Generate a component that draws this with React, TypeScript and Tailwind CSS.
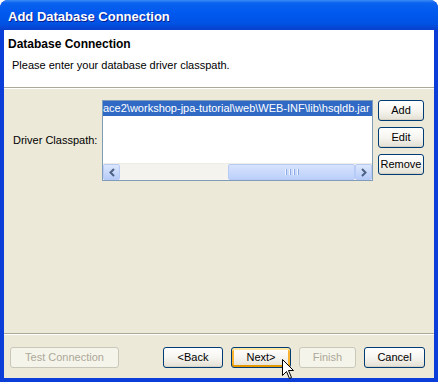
import React from "react";

const font = { fontFamily: '"Liberation Sans", Arial, sans-serif' };

function XpButton({ label, w, state }: { label: string; w: number; state: "normal" | "disabled" | "hover" }) {
  if (state === "disabled") {
    return (
      <div
        className="h-[21px] flex items-center justify-center rounded-[3px] border border-[#c9c7ba] bg-[#f5f4ea] text-[#aca899] text-[11px]"
        style={{ width: w }}
      >
        {label}
      </div>
    );
  }
  if (state === "hover") {
    return (
      <div
        className="h-[21px] flex items-center justify-center rounded-[3px] border border-[#003c74] text-black text-[11px] bg-gradient-to-b from-[#ffffff] via-[#f6f5f0] to-[#e3e0d3] shadow-[inset_0_2px_0_#ffe7a2,inset_0_-2px_0_#e59700,inset_2px_0_0_#f8b330,inset_-2px_0_0_#f8b330]"
        style={{ width: w }}
      >
        {label}
      </div>
    );
  }
  return (
    <div
      className="h-[21px] flex items-center justify-center rounded-[3px] border border-[#003c74] text-black text-[11px] bg-gradient-to-b from-[#ffffff] via-[#f6f5f0] to-[#e3e0d3] shadow-[inset_0_-1px_0_#d6d0c5]"
      style={{ width: w }}
    >
      {label}
    </div>
  );
}

function SideButton({ label }: { label: string }) {
  return (
    <div className="w-[46px] h-[21px] flex items-center justify-center rounded-[3px] border border-[#003c74] text-black text-[11px] bg-gradient-to-b from-[#ffffff] via-[#f6f5f0] to-[#e3e0d3] shadow-[inset_0_-1px_0_#d6d0c5]">
      {label}
    </div>
  );
}

export default function App() {
  return (
    <div className="w-[438px] h-[382px] bg-white relative" style={font}>
      <div className="w-full h-full flex flex-col rounded-t-[8px] overflow-hidden bg-[#0b3ed8]">
        {/* Title bar */}
        <div className="h-[30px] flex items-center pl-[8px] pt-[3px] bg-[linear-gradient(to_bottom,#3b8cf5_0%,#0a62f0_10%,#0058ee_45%,#0052e3_80%,#0a3fcc_100%)]">
          <span className="text-white font-bold text-[13px] [text-shadow:1px_1px_0_#0a1f8f]">
            Add Database Connection
          </span>
        </div>
        {/* Client area */}
        <div className="flex-1 flex flex-col mx-[4px] mb-[4px] bg-[#ece9d8]">
          {/* Header */}
          <div className="h-[57px] bg-white flex flex-col pl-[4px] pt-[5px]">
            <div className="text-[12px] font-bold text-black leading-[16px] pt-[1px]">Database Connection</div>
            <div className="text-[11px] text-black leading-[14px] mt-[6px] pl-[4px]">
              Please enter your database driver classpath.
            </div>
          </div>
          <div className="h-[1px] bg-[#aca899]" />
          <div className="h-[1px] bg-white" />
          {/* Middle */}
          <div className="flex-1 flex items-start pt-[11px] pl-[9px]">
            <div className="w-[89px] h-[81px] flex items-center text-[11px] text-black">Driver Classpath:</div>
            <div className="w-[271px] h-[81px] border border-[#7f9db9] bg-white flex flex-col">
              <div className="h-[15px] bg-[#316ac5] text-white text-[11px] leading-[15px] whitespace-nowrap overflow-hidden">
                ace2\workshop-jpa-tutorial\web\WEB-INF\lib\hsqldb.jar
              </div>
              <div className="flex-1" />
              {/* Scrollbar */}
              <div className="h-[17px] flex bg-[#f4f3ee] border-t border-[#eeede5]">
                <div className="w-[17px] h-full rounded-[2px] border border-[#b8cbf6] bg-gradient-to-b from-[#dce7fd] to-[#b6cbf8] flex items-center justify-center">
                  <svg width="8" height="9" viewBox="0 0 8 9">
                    <path d="M6 1 L2.5 4.5 L6 8" stroke="#4d6185" strokeWidth="2" fill="none" />
                  </svg>
                </div>
                <div className="flex-1 flex justify-end">
                  <div className="w-[127px] h-full rounded-[2px] border border-[#b8cbf6] bg-gradient-to-b from-[#d7e3fd] to-[#bcd0fa] flex items-center justify-center gap-[1px]">
                    <div className="w-[1px] h-[6px] bg-[#eef3fe] shadow-[1px_0_0_#8caae6]" />
                    <div className="w-[1px] h-[6px] bg-transparent" />
                    <div className="w-[1px] h-[6px] bg-[#eef3fe] shadow-[1px_0_0_#8caae6]" />
                    <div className="w-[1px] h-[6px] bg-transparent" />
                    <div className="w-[1px] h-[6px] bg-[#eef3fe] shadow-[1px_0_0_#8caae6]" />
                    <div className="w-[1px] h-[6px] bg-transparent" />
                    <div className="w-[1px] h-[6px] bg-[#eef3fe] shadow-[1px_0_0_#8caae6]" />
                  </div>
                </div>
                <div className="w-[17px] h-full rounded-[2px] border border-[#b8cbf6] bg-gradient-to-b from-[#dce7fd] to-[#b6cbf8] flex items-center justify-center">
                  <svg width="8" height="9" viewBox="0 0 8 9">
                    <path d="M2 1 L5.5 4.5 L2 8" stroke="#4d6185" strokeWidth="2" fill="none" />
                  </svg>
                </div>
              </div>
            </div>
            <div className="ml-[5px] flex flex-col gap-[6px]">
              <SideButton label="Add" />
              <SideButton label="Edit" />
              <SideButton label="Remove" />
            </div>
          </div>
          {/* Bottom bar */}
          <div className="h-[1px] bg-[#aca899]" />
          <div className="h-[1px] bg-white" />
          <div className="h-[43px] flex items-start pt-[12px] pl-[6px] pr-[9px]">
            <XpButton label="Test Connection" w={109} state="disabled" />
            <div className="flex-1" />
            <div className="flex gap-[8px]">
              <XpButton label="<Back" w={60} state="normal" />
              <XpButton label="Next>" w={60} state="hover" />
              <XpButton label="Finish" w={57} state="disabled" />
              <XpButton label="Cancel" w={61} state="normal" />
            </div>
          </div>
        </div>
      </div>
      {/* Mouse cursor */}
      <svg className="absolute left-[282px] top-[359px]" width="13" height="21" viewBox="0 0 13 21">
        <path d="M0.5 0.5 L0.5 16.5 L4.5 12.5 L7.5 19.5 L9.5 18.5 L6.5 11.5 L11.5 11.5 Z" fill="white" stroke="black" strokeWidth="1" />
      </svg>
    </div>
  );
}
